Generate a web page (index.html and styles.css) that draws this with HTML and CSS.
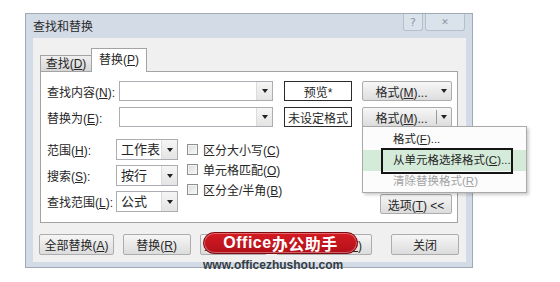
FILE: index.html
```html
<!DOCTYPE html>
<html lang="zh-CN">
  <head>
    <meta charset="UTF-8" />
    <title>查找和替换</title>
    <link rel="stylesheet" href="styles.css">
  </head>
  <body>
    <div class="dialog">
      <div class="titlebar">
        <span class="title">查找和替换</span>
        <div class="caption-btns">
          <span class="cap-btn help">?</span>
          <span class="cap-btn close">✕</span>
        </div>
      </div>

      <div class="client">
        <div class="tabs">
          <div class="tab"><span>查找(<u>D</u>)</span></div>
          <div class="tab active"><span>替换(<u>P</u>)</span></div>
        </div>

        <div class="panel">
          <div class="row">
            <span class="lbl">查找内容(<u>N</u>):</span>
            <div class="combo wide"><span class="field"></span><span class="arrow"></span></div>
            <div class="preview">预览*</div>
            <div class="fmt-btn"><span class="fmt-main"><span>格式(<u>M</u>)...</span></span><span class="fmt-arrow"></span></div>
          </div>
          <div class="row">
            <span class="lbl">替换为(<u>E</u>):</span>
            <div class="combo wide"><span class="field"></span><span class="arrow"></span></div>
            <div class="preview">未设定格式</div>
            <div class="fmt-btn"><span class="fmt-main"><span>格式(<u>M</u>)...</span></span><span class="fmt-arrow split"></span></div>
          </div>

          <div class="options">
            <div class="scope">
              <div class="srow">
                <span class="slbl">范围(<u>H</u>):</span>
                <div class="combo small"><span class="field">工作表</span><span class="arrow"></span></div>
              </div>
              <div class="srow">
                <span class="slbl">搜索(<u>S</u>):</span>
                <div class="combo small"><span class="field">按行</span><span class="arrow"></span></div>
              </div>
              <div class="srow">
                <span class="slbl">查找范围(<u>L</u>):</span>
                <div class="combo small"><span class="field">公式</span><span class="arrow"></span></div>
              </div>
            </div>

            <div class="checks">
              <label class="check"><span class="box"></span><span>区分大小写(<u>C</u>)</span></label>
              <label class="check"><span class="box"></span><span>单元格匹配(<u>O</u>)</span></label>
              <label class="check"><span class="box"></span><span>区分全/半角(<u>B</u>)</span></label>
            </div>

            <div class="btn opt-btn"><span>选项(<u>T</u>) &lt;&lt;</span></div>
          </div>
        </div>

        <div class="actions">
          <div class="btn w75"><span>全部替换(<u>A</u>)</span></div>
          <div class="btn w68"><span>替换(<u>R</u>)</span></div>
          <div class="btn w68"><span>查找全部(<u>I</u>)</span></div>
          <div class="btn w96"><span>查找下一个(<u>F</u>)</span></div>
          <div class="btn w68 close-btn"><span>关闭</span></div>
        </div>
      </div>
    </div>

    <div class="menu">
      <div class="item">格式(<u>F</u>)...</div>
      <div class="item hot">从单元格选择格式(<u>C</u>)...<span class="mark"></span></div>
      <div class="item off">清除替换格式(<u>R</u>)</div>
    </div>

    <div class="logo"><span class="logo-en">Office</span><span>办公助手</span></div>
    <div class="site">www.officezhushou.com</div>
  </body>
</html>
```

FILE: styles.css
```css
* {
  margin: 0;
  padding: 0;
  box-sizing: border-box;
}

body {
  font-family: "Liberation Sans", "Noto Sans CJK SC", sans-serif;
  font-size: 12px;
  color: #262626;
  background: #fff;
  width: 560px;
  height: 282px;
  overflow: hidden;
  position: relative;
}

u {
  text-decoration: underline;
  text-underline-offset: 1px;
}

/* window frame */
.dialog {
  margin: 13px 0 0 25px;
  width: 448px;
  height: 255px;
  background: #d3dce6;
  border: 1px solid #9eaab6;
  display: flex;
  flex-direction: column;
  padding: 0 6px 5px 7px;
}

.titlebar {
  height: 24px;
  display: flex;
  align-items: flex-start;
}

.title {
  line-height: 27px;
  color: #2a2a2a;
}

.caption-btns {
  margin-left: auto;
  margin-right: 1px;
  display: flex;
  gap: 2px;
}

.cap-btn {
  height: 17px;
  border: 1px solid #b4c0cc;
  border-top: none;
  border-radius: 0 0 3px 3px;
  background: #dae2eb;
  color: #8b96a2;
  display: flex;
  align-items: center;
  justify-content: center;
  font-family: "DejaVu Sans", sans-serif;
}

.cap-btn.help {
  width: 20px;
  font-size: 11px;
}

.cap-btn.close {
  width: 40px;
  font-size: 9px;
  font-weight: bold;
}

.client {
  flex: 1;
  background: #f0f0f0;
  padding: 10px 7px 0 7px;
}

/* tabs */
.tabs {
  display: flex;
  align-items: flex-end;
  height: 23px;
}

.tab {
  height: 16px;
  width: 52px;
  border: 1px solid #a3a3a3;
  border-bottom: none;
  background: linear-gradient(#efefef, #d6d6d6);
  display: flex;
  align-items: center;
  justify-content: center;
  line-height: 1;
}

.tab.active {
  height: 24px;
  width: 56px;
  margin-left: -1px;
  margin-bottom: -1px;
  background: #fff;
  position: relative;
  z-index: 1;
  padding-bottom: 2px;
}

.panel {
  width: 418px;
  height: 152px;
  background: #fff;
  border: 1px solid #a3a3a3;
  padding: 9px 0 0 6px;
}

.row {
  display: flex;
  align-items: center;
  height: 20px;
}

.row + .row {
  margin-top: 6px;
}

.lbl {
  width: 72px;
}

.combo {
  display: flex;
  height: 20px;
  border: 1px solid #abadb3;
  background: #fff;
}

.combo.wide {
  width: 154px;
}

.combo .field {
  flex: 1;
  padding-left: 4px;
  line-height: 19px;
  font-size: 13px;
}

.combo .arrow,
.fmt-arrow {
  width: 16px;
  display: flex;
  align-items: center;
  justify-content: center;
}

.combo .arrow {
  border-left: 1px solid #dcdcdc;
  background: linear-gradient(#f5f5f5, #e4e4e4);
}

.combo .arrow::before,
.fmt-arrow::before {
  content: "";
  border: 3px solid transparent;
  border-top: 4px solid #222;
  border-bottom: 0;
}

.preview {
  margin-left: 11px;
  width: 68px;
  height: 20px;
  border: 1px solid #2b2b2b;
  display: flex;
  align-items: center;
  justify-content: center;
  font-size: 12px;
}

.fmt-btn {
  margin-left: 10px;
  width: 90px;
  height: 20px;
  border: 1px solid #acacac;
  border-radius: 2px;
  background: linear-gradient(#f7f7f7, #dddddd);
  display: flex;
}

.fmt-main {
  flex: 1;
  display: flex;
  align-items: center;
  justify-content: center;
  padding-left: 4px;
}

.fmt-arrow {
  width: 15px;
}

.fmt-arrow.split {
  border-left: 1px solid #9a9a9a;
  margin: 2px 0;
}

/* lower options block */
.options {
  display: flex;
  margin-top: 12px;
  padding-right: 5px;
}

.scope {
  display: flex;
  flex-direction: column;
  gap: 5px;
}

.srow {
  display: flex;
  align-items: center;
}

.slbl {
  width: 69px;
}

.combo.small {
  width: 62px;
  height: 21px;
}

.checks {
  margin-left: 9px;
  display: flex;
  flex-direction: column;
}

.check {
  height: 20px;
  display: flex;
  align-items: center;
  gap: 5px;
}

.box {
  width: 11px;
  height: 11px;
  border: 1px solid #8e8f8f;
  background: linear-gradient(135deg, #dcdcdc, #f8f8f8);
  box-shadow: inset 0 0 0 1px #f4f4f4;
}

.btn {
  height: 21px;
  border: 1px solid #adadad;
  border-radius: 2px;
  background: linear-gradient(#f6f6f6, #dcdcdc);
  display: flex;
  align-items: center;
  justify-content: center;
}

.opt-btn {
  margin-left: auto;
  align-self: flex-end;
  margin-bottom: -2px;
  width: 72px;
  height: 20px;
}

/* bottom buttons */
.actions {
  display: flex;
  gap: 9px;
  margin: 11px 0 0 -1px;
}

.w75 { width: 75px; }
.w68 { width: 68px; }
.w96 { width: 96px; }

.close-btn {
  margin-left: 10px;
}

/* drop-down menu of the format button */
.menu {
  position: absolute;
  left: 362px;
  top: 126px;
  width: 165px;
  height: 67px;
  background: #fcfcfc;
  border: 1px solid #a9a9a9;
  box-shadow: 2px 2px 3px rgba(0, 0, 0, 0.2);
  padding-top: 2px;
  z-index: 5;
}

.item {
  height: 21px;
  line-height: 21px;
  padding-left: 30px;
  position: relative;
  font-size: 11.5px;
}

.item.hot {
  background: #d5ebd9;
}

.item.off {
  color: #a3a3a3;
}

.mark {
  position: absolute;
  left: 18px;
  top: -2px;
  width: 132px;
  height: 26px;
  border: 2px solid #151515;
}

/* site watermark */
.logo {
  position: absolute;
  left: 203px;
  top: 232px;
  width: 155px;
  height: 22px;
  border-radius: 11px;
  background: linear-gradient(#d41c22, #b3101a);
  border: 1px solid #7d0b0f;
  box-shadow: inset 0 0 0 1px rgba(255, 255, 255, 0.35);
  color: #fff;
  font-weight: bold;
  font-size: 16px;
  display: flex;
  align-items: center;
  justify-content: center;
  letter-spacing: 0.5px;
  z-index: 6;
}

.logo-en {
  font-family: "Liberation Sans", sans-serif;
}

.site {
  position: absolute;
  left: 203px;
  top: 258px;
  font-family: "Liberation Sans", sans-serif;
  font-weight: bold;
  font-size: 12px;
  color: #363c44;
  z-index: 6;
}
```
